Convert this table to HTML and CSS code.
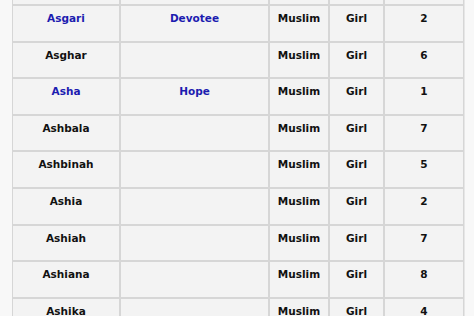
FILE: index.html
```html
<!DOCTYPE html>
<html>
<head>
<meta charset="utf-8">
<link rel="stylesheet" href="styles.css">
</head>
<body>
<div class="wrap">
<table class="names">
  <colgroup>
    <col class="c1"><col class="c2"><col class="c3"><col class="c4"><col class="c5">
  </colgroup>
  <tr class="stub"><td></td><td></td><td></td><td></td><td></td></tr>
  <tr><td><a class="lnk">Asgari</a></td><td><a class="lnk">Devotee</a></td><td>Muslim</td><td>Girl</td><td>2</td></tr>
  <tr><td>Asghar</td><td></td><td>Muslim</td><td>Girl</td><td>6</td></tr>
  <tr><td><a class="lnk">Asha</a></td><td><a class="lnk">Hope</a></td><td>Muslim</td><td>Girl</td><td>1</td></tr>
  <tr><td>Ashbala</td><td></td><td>Muslim</td><td>Girl</td><td>7</td></tr>
  <tr><td>Ashbinah</td><td></td><td>Muslim</td><td>Girl</td><td>5</td></tr>
  <tr><td>Ashia</td><td></td><td>Muslim</td><td>Girl</td><td>2</td></tr>
  <tr><td>Ashiah</td><td></td><td>Muslim</td><td>Girl</td><td>7</td></tr>
  <tr><td>Ashiana</td><td></td><td>Muslim</td><td>Girl</td><td>8</td></tr>
  <tr><td>Ashika</td><td></td><td>Muslim</td><td>Girl</td><td>4</td></tr>
</table>
</div>
</body>
</html>
```
FILE: styles.css
```css
html, body {
  margin: 0;
  padding: 0;
  background: #f8f8f8;
  overflow: hidden;
}
.wrap {
  padding: 0 9px 0 12px;
  width: 453px;
}
.names {
  border-collapse: separate;
  border-spacing: 0;
  table-layout: fixed;
  width: 453px;
  border-right: 1px solid #e6e6e6;
  background: #f3f3f3;
  font-family: "DejaVu Sans", Verdana, sans-serif;
  font-weight: bold;
  font-size: 10.5px;
  color: #111;
}
.c1 { width: 108px; }
.c2 { width: 149px; }
.c3 { width: 60px; }
.c4 { width: 55px; }
.c5 { width: 80px; }
.names td {
  border: 1px solid #d6d6d6;
  text-align: center;
  vertical-align: top;
  padding: 6px 2px 0;
  box-sizing: border-box;
  height: 36.6px;
  line-height: 13px;
}
.names .stub td {
  height: 5px;
  padding: 0;
  border-top: none;
}
.lnk {
  color: #1c1cb0;
  text-decoration: none;
}
```
